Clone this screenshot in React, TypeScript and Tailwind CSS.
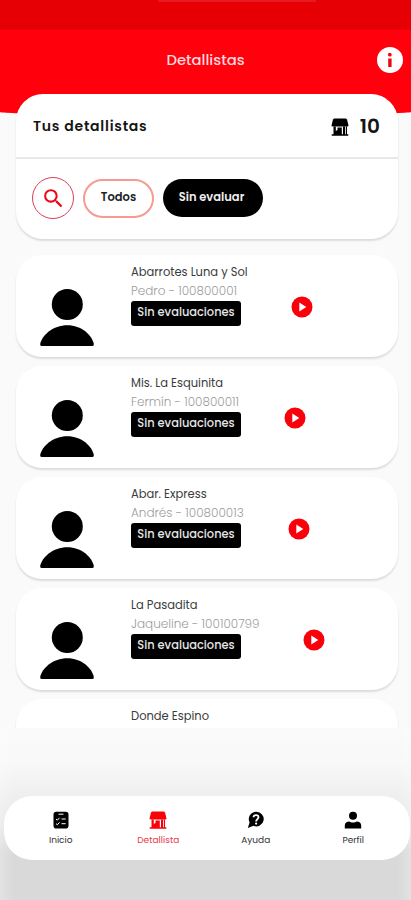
import React from 'react';
import { MdSearch } from 'react-icons/md';

interface Retailer {
  name: string;
  contact: string;
  playClass: string;
}

const retailers: Retailer[] = [
  { name: 'Abarrotes Luna y Sol', contact: 'Pedro - 100800001', playClass: 'pl-[160px]' },
  { name: 'Mis. La Esquinita', contact: 'Fermín - 100800011', playClass: 'pl-[153px]' },
  { name: 'Abar. Express', contact: 'Andrés - 100800013', playClass: 'pl-[157px]' },
  { name: 'La Pasadita', contact: 'Jaqueline - 100100799', playClass: 'pl-[172px]' },
  { name: 'Donde Espino', contact: '', playClass: '' },
];

const StoreIcon: React.FC<{ className?: string }> = ({ className = '' }) => (
  <svg viewBox="0 0 18 18" fill="currentColor" className={className}>
    <path d="M3 .5h12l1 1 1.500 6q0 1-1.300 1H1.800Q.5 8.500.5 7.500L2 1.500z" />
    <path d="M2.500 8.500h2.300V13l1.700-1V9.500h4.300v6.700H12V8.500h-1.500 3.700v7.700h.8V8.500h1v7.700h1.300v1.500H.7v-1.500h1.800z" />
  </svg>
);

const InfoIcon = () => (
  <svg viewBox="0 0 26 26" className="size-[26px]">
    <circle cx="13" cy="13" r="13" fill="#fff" />
    <circle cx="12.800" cy="7.700" r="1.900" fill="#ed0710" />
    <path d="M11.200 11.500h3.400v8.500h-3.400z" fill="#ed0710" />
  </svg>
);

const AvatarIcon = () => (
  <svg viewBox="0 0 56 60" className="h-[60px] w-14">
    <circle cx="28.300" cy="16.500" r="15.500" />
    <path d="M1.200 56C3 47 14 37.200 28.300 37.200S53 47 54.800 56q.3 2-1.300 2h-51Q.9 58 1.200 56z" />
  </svg>
);

const PlayIcon = () => (
  <svg viewBox="0 0 22 22" className="size-[22px]">
    <circle cx="11" cy="11" r="10.500" fill="#fb000b" />
    <path d="M8.300 6.500v9l7-4.500z" fill="#fff" />
  </svg>
);

const ChecklistIcon = () => (
  <svg viewBox="0 0 16 18" className="h-[18px] w-4">
    <rect x=".5" y=".8" width="15" height="16.700" rx="2.800" />
    <path d="M5.500 3.200h5M8.500 8h4.200M8.500 12.700h4.200M3 8l1.300 1.200L6.500 6.800M3 12.600l1.300 1.200 2.200-2.400" stroke="#fff" strokeWidth="1" fill="none" />
  </svg>
);

const HelpIcon = () => (
  <svg viewBox="0 0 18 18" className="size-[18px]">
    <path d="M9.300 .8a7.300 7.300 0 1 1-2.800 14L.8 17l1.800-5.500A7.300 7.300 0 0 1 9.300.8z" />
    <path d="M6.500 6.300C6.600 3.300 11.500 3.300 11.500 6.200c0 1.900-2.400 1.900-2.400 4.300" stroke="#fff" strokeWidth="1.800" fill="none" />
    <circle cx="9.100" cy="12.600" r="1.100" fill="#fff" />
  </svg>
);

const PersonIcon = () => (
  <svg viewBox="0 0 18 18" className="size-[18px]">
    <circle cx="9" cy="4.800" r="4" />
    <path d="M.8 17.500v-3c0-2.800 2-4 4.600-4 1.600 1.400 5.600 1.400 7.200 0 2.600 0 4.600 1.200 4.600 4v3z" />
  </svg>
);

const RetailerCard: React.FC<{ retailer: Retailer }> = ({ retailer }) => (
  <div className="flex h-[102px] shrink-0 rounded-[26px] bg-white shadow-[0_2px_2px_rgba(0,0,0,0.12)]">
    <div className="w-[115px] shrink-0 pt-[33px] pl-[23px]">
      {retailer.contact && <AvatarIcon />}
    </div>
    <div className="w-0 pt-[9px]">
      <p className="text-[11.500px] leading-4 whitespace-nowrap text-[#3b3b3b]">{retailer.name}</p>
      {retailer.contact && (
        <>
          <p className="mt-[3px] text-[12px] leading-4 font-light whitespace-nowrap text-[#9c9c9c]">{retailer.contact}</p>
          <span className="mt-[2px] flex h-[25px] w-[110px] items-center justify-center rounded-[3px] bg-black pb-px text-[11.400px] font-medium whitespace-nowrap text-[#e6e6e6]">
            Sin evaluaciones
          </span>
        </>
      )}
    </div>
    {retailer.contact && (
      <div className={`pt-[41px] ${retailer.playClass}`}>
        <PlayIcon />
      </div>
    )}
  </div>
);

const tabs = [
  { label: 'Inicio', icon: <ChecklistIcon />, color: 'text-[#333]' },
  { label: 'Detallista', icon: <StoreIcon className="size-[18px] text-[#fb0009]" />, color: 'text-[#e9394b]' },
  { label: 'Ayuda', icon: <HelpIcon />, color: 'text-[#333]' },
  { label: 'Perfil', icon: <PersonIcon />, color: 'text-[#333]' },
];

export default function App() {
  return (
    <div className="flex h-[900px] w-[411px] flex-col overflow-hidden bg-[#fafafa] font-['Poppins','Inter',sans-serif]">
      <header className="h-[115px] shrink-0 overflow-hidden rounded-b-[50%_3px] bg-[#ff000c]">
        <div className="h-[30px] bg-[#e60006]">
          <div className="mx-auto h-[2px] w-[158px] translate-x-[31px] bg-[#e81a20]" />
        </div>
        <div className="grid h-[60px] grid-cols-[1fr_auto_1fr] items-center">
          <h1 className="col-start-2 pt-px text-[14.800px] font-medium text-[#ffd9dc]">Detallistas</h1>
          <div className="flex justify-end pr-2">
            <InfoIcon />
          </div>
        </div>
      </header>

      <section className="z-10 -mt-[21px] mr-[13px] ml-4 h-[145px] shrink-0 rounded-[27px] bg-white shadow-[0_2px_2px_rgba(0,0,0,0.12)]">
        <div className="flex h-[65px] items-center border-b-2 border-[#e8e8e8] px-[17px]">
          <h2 className="pt-px text-[14px] font-semibold tracking-[0.750px] text-[#151515]">Tus detallistas</h2>
          <StoreIcon className="mt-[3px] ml-auto size-[18px] text-black" />
          <span className="mr-px ml-[11px] text-[20px] font-semibold text-[#151515]">10</span>
        </div>
        <div className="flex items-center gap-[9px] pt-[18px] pl-4">
          <button className="flex size-[42px] items-center justify-center rounded-full border border-[#dc3f57] text-[#ee0714]">
            <MdSearch size={25} />
          </button>
          <button className="h-[39px] w-[71px] rounded-full border-2 border-[#f79a94] pb-px text-[11.500px] font-semibold text-[#222]">
            Todos
          </button>
          <button className="h-[38px] w-[100px] rounded-full bg-black pr-[3px] text-[11.500px] font-semibold text-[#eee]">
            Sin evaluar
          </button>
        </div>
      </section>

      <main className="mr-[10px] ml-[13px] flex h-[489px] shrink-0 flex-col gap-[9px] overflow-hidden px-[3px] pt-4">
        {retailers.map((retailer) => (
          <RetailerCard key={retailer.name} retailer={retailer} />
        ))}
      </main>

      <footer className="h-[172px] shrink-0 bg-[linear-gradient(to_bottom,#fafafa_0,#f8f8f8_35px,#f1f1f1_60px,#e8e8e8_95px,#d9d9d9_125px,#d9d9d9_172px)]">
        <div className="h-full bg-[linear-gradient(to_right,#ffffff40,transparent_14px,transparent_397px,#ffffff40)] pt-[68px] pl-1">
          <nav className="grid h-16 w-[406px] grid-cols-[repeat(4,97.500px)] justify-center rounded-[28px] bg-white">
            {tabs.map((tab) => (
              <div key={tab.label} className="flex flex-col items-center pt-[15px]">
                {tab.icon}
                <span className={`mt-[5px] text-[9px] leading-3 ${tab.color}`}>{tab.label}</span>
              </div>
            ))}
          </nav>
        </div>
      </footer>
    </div>
  );
}
